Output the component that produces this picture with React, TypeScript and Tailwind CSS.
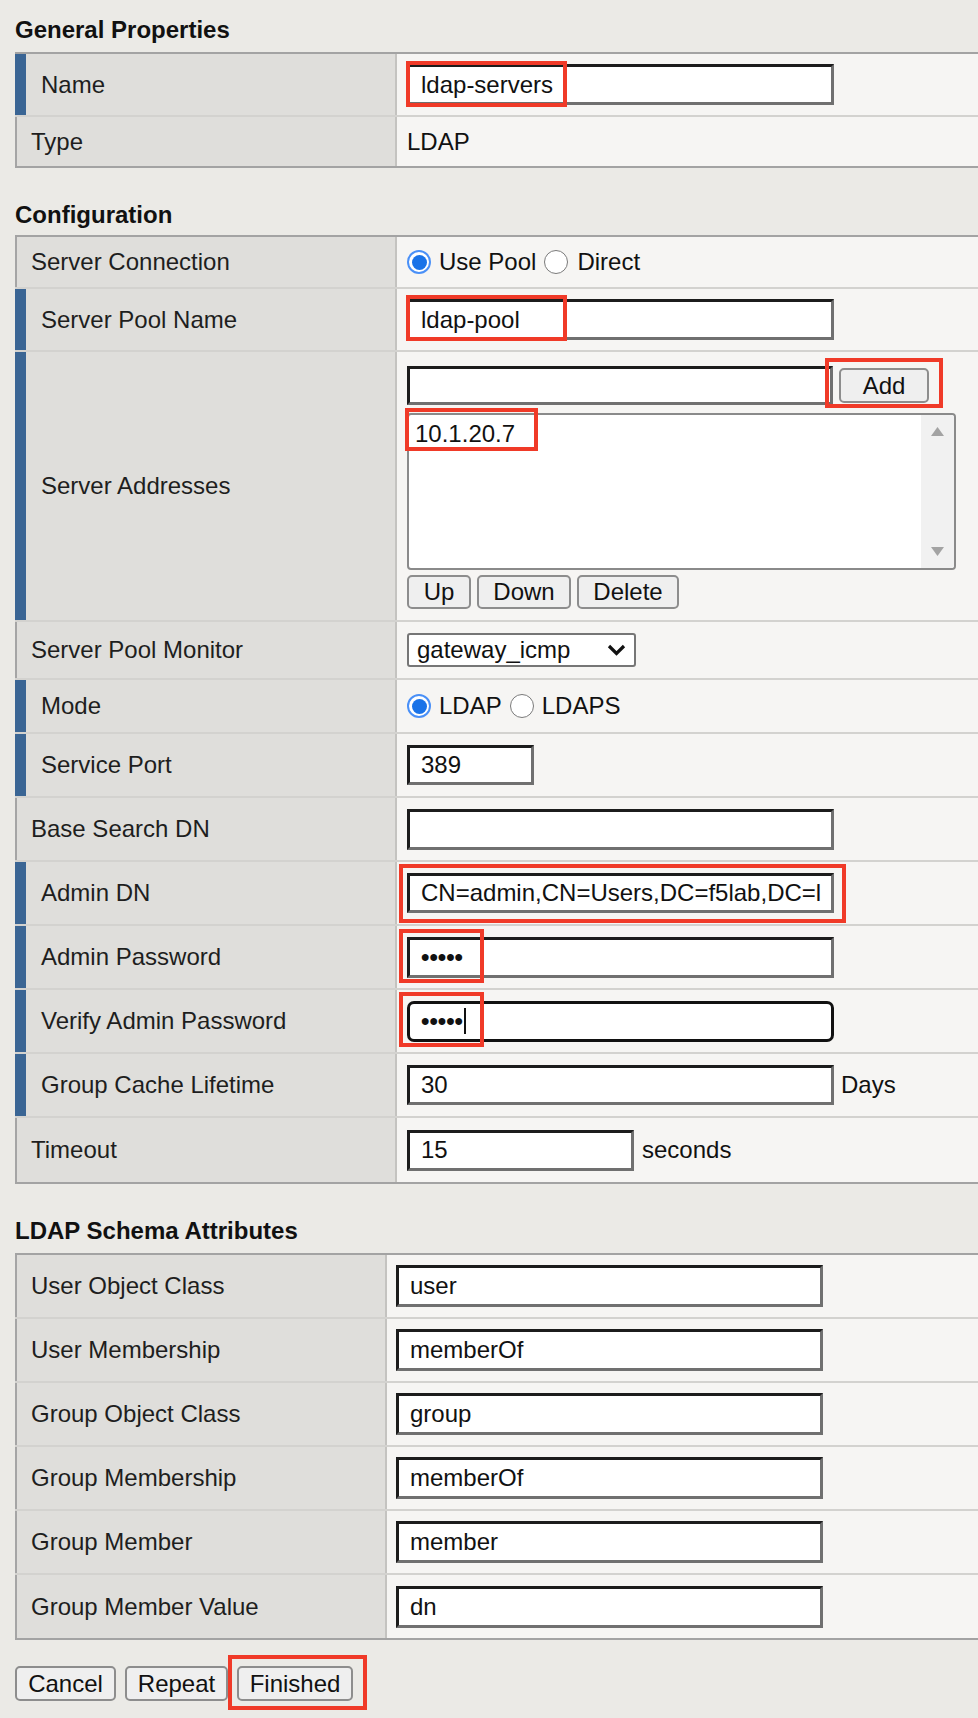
import React from "react";

function Red({ cls }: { cls: string }) {
  return <span className={`pointer-events-none absolute border-[4px] border-[#f03a28] ${cls}`} />;
}

function Box({
  w,
  h = "h-[41px]",
  focus = false,
  children,
  red,
}: {
  w: string;
  h?: string;
  focus?: boolean;
  children?: React.ReactNode;
  red?: React.ReactNode;
}) {
  return (
    <div className={`relative shrink-0 ${w} ${h}`}>
      <div
        className={`flex h-full w-full items-center overflow-hidden whitespace-nowrap bg-white pl-[11px] text-[24px] text-[#111] ${
          focus
            ? "rounded-[7px] border-[3px] border-[#111]"
            : "border-[3px] border-t-[#1c1c1c] border-l-[#1c1c1c] border-r-[#707070] border-b-[#707070]"
        }`}
      >
        {children}
      </div>
      {red}
    </div>
  );
}

function Row({
  label,
  bar = false,
  h,
  last = false,
  lw = "w-[382px]",
  vcls = "items-center pl-[10px]",
  children,
}: {
  label: string;
  bar?: boolean;
  h: string;
  last?: boolean;
  lw?: string;
  vcls?: string;
  children?: React.ReactNode;
}) {
  return (
    <div className={`flex ${h} ${last ? "" : "border-b-2 border-[#d3d2cf]"}`}>
      <div
        className={`flex shrink-0 items-center ${lw} border-r-2 border-r-[#c4c3c0] bg-[#dfdedb] text-[24px] text-[#1e1e1e] ${
          bar ? "border-l-[11px] border-l-[#3a6594] pl-[15px]" : "border-l-2 border-l-[#a5a5a5] pl-[14px]"
        }`}
      >
        {label}
      </div>
      <div className={`flex flex-1 bg-[#f6f5f3] text-[24px] text-[#111] ${vcls}`}>{children}</div>
    </div>
  );
}

function Radio({ on }: { on: boolean }) {
  return on ? (
    <span className="flex h-[24px] w-[24px] shrink-0 items-center justify-center rounded-full border-2 border-[#4a90f7] bg-white">
      <span className="block h-[15px] w-[15px] rounded-full bg-[#1a73e8]" />
    </span>
  ) : (
    <span className="block h-[24px] w-[24px] shrink-0 rounded-full border-[1.5px] border-[#7a7a7a] bg-white" />
  );
}

function Btn({ w, h = "h-[34px]", children, red }: { w: string; h?: string; children: React.ReactNode; red?: React.ReactNode }) {
  return (
    <div className={`relative shrink-0 ${w} ${h}`}>
      <div className="flex h-full w-full items-center justify-center rounded-[5px] border-2 border-[#8d8d8d] bg-[#efefef] text-[24px] text-[#111]">
        {children}
      </div>
      {red}
    </div>
  );
}

function Heading({ children, cls }: { children: React.ReactNode; cls: string }) {
  return <div className={`text-[24px] font-bold leading-[27px] text-[#111] ${cls}`}>{children}</div>;
}

export default function App() {
  return (
    <div className="min-h-screen w-[978px] overflow-hidden bg-[#ebeae6] pl-[15px] pt-[16px] font-['Liberation_Sans',Arial,sans-serif]">
      <Heading cls="mb-[9px]">General Properties</Heading>
      <div className="border-t-2 border-b-2 border-[#a3a3a3]">
        <Row label="Name" bar h="h-[63px]">
          <Box w="w-[427px]" red={<Red cls="-left-[1px] -top-[3px] h-[46px] w-[161px]" />}>
            ldap-servers
          </Box>
        </Row>
        <Row label="Type" h="h-[49px]" last>
          LDAP
        </Row>
      </div>

      <Heading cls="mt-[33px] mb-[7px]">Configuration</Heading>
      <div className="border-t-2 border-b-2 border-[#a3a3a3]">
        <Row label="Server Connection" h="h-[52px]">
          <div className="flex items-center">
            <Radio on />
            <span className="ml-[8px]">Use Pool</span>
            <span className="ml-[8px]">
              <Radio on={false} />
            </span>
            <span className="ml-[9px]">Direct</span>
          </div>
        </Row>
        <Row label="Server Pool Name" bar h="h-[63px]">
          <Box w="w-[427px]" red={<Red cls="-left-[1px] -top-[4px] h-[46px] w-[161px]" />}>
            ldap-pool
          </Box>
        </Row>
        <Row label="Server Addresses" bar h="h-[270px]" vcls="flex-col items-start pl-[10px] pt-[14px]">
          <div className="flex items-center">
            <Box w="w-[426px]" h="h-[39px]" />
            <div className="ml-[6px]">
              <Btn w="w-[90px]" h="h-[35px]" red={<Red cls="-left-[14px] -top-[10px] h-[50px] w-[118px]" />}>
                Add
              </Btn>
            </div>
          </div>
          <div className="relative mt-[8px] flex h-[157px] w-[549px] rounded-[4px] border-2 border-[#8a8a8a] bg-white">
            <div className="flex-1 pl-[6px] pt-[1px] text-[24px] text-[#111]">10.1.20.7</div>
            <div className="flex w-[33px] flex-col items-center justify-between rounded-r-[3px] bg-[#f1f1f1] py-[12px]">
              <svg width="13" height="9" viewBox="0 0 13 9">
                <polygon points="6.5,0 13,9 0,9" fill="#a3a3a3" />
              </svg>
              <svg width="13" height="9" viewBox="0 0 13 9">
                <polygon points="0,0 13,0 6.5,9" fill="#a3a3a3" />
              </svg>
            </div>
            <Red cls="-left-[4px] -top-[7px] h-[43px] w-[133px]" />
          </div>
          <div className="mt-[5px] flex gap-[6px]">
            <Btn w="w-[64px]">Up</Btn>
            <Btn w="w-[94px]">Down</Btn>
            <Btn w="w-[102px]">Delete</Btn>
          </div>
        </Row>
        <Row label="Server Pool Monitor" h="h-[58px]">
          <div className="flex h-[34px] w-[229px] items-center justify-between rounded-[3px] border-2 border-[#767676] bg-white pl-[8px] pr-[8px]">
            <span>gateway_icmp</span>
            <svg width="19" height="12" viewBox="0 0 19 12">
              <polyline points="2,2 9.5,9.5 17,2" fill="none" stroke="#111" strokeWidth="3.2" />
            </svg>
          </div>
        </Row>
        <Row label="Mode" bar h="h-[54px]">
          <div className="flex items-center">
            <Radio on />
            <span className="ml-[8px]">LDAP</span>
            <span className="ml-[8px]">
              <Radio on={false} />
            </span>
            <span className="ml-[8px]">LDAPS</span>
          </div>
        </Row>
        <Row label="Service Port" bar h="h-[64px]">
          <Box w="w-[127px]" h="h-[40px]">389</Box>
        </Row>
        <Row label="Base Search DN" h="h-[64px]">
          <Box w="w-[427px]" />
        </Row>
        <Row label="Admin DN" bar h="h-[64px]">
          <Box w="w-[427px]" h="h-[40px]" red={<Red cls="-left-[8px] -top-[9px] h-[59px] w-[447px]" />}>
            CN=admin,CN=Users,DC=f5lab,DC=l
          </Box>
        </Row>
        <Row label="Admin Password" bar h="h-[64px]">
          <Box w="w-[427px]" red={<Red cls="-left-[8px] -top-[8px] h-[54px] w-[85px]" />}>
            <span className="font-bold">•••••</span>
          </Box>
        </Row>
        <Row label="Verify Admin Password" bar h="h-[64px]">
          <Box w="w-[427px]" focus red={<Red cls="-left-[8px] -top-[9px] h-[55px] w-[85px]" />}>
            <span className="font-bold">•••••</span>
            <span className="ml-[1px] block h-[26px] w-[2px] bg-[#111]" />
          </Box>
        </Row>
        <Row label="Group Cache Lifetime" bar h="h-[64px]">
          <Box w="w-[427px]" h="h-[40px]">30</Box>
          <span className="ml-[7px]">Days</span>
        </Row>
        <Row label="Timeout" h="h-[64px]" last>
          <Box w="w-[227px]">15</Box>
          <span className="ml-[8px]">seconds</span>
        </Row>
      </div>

      <Heading cls="mt-[33px] mb-[9px]">LDAP Schema Attributes</Heading>
      <div className="border-t-2 border-b-2 border-[#a3a3a3]">
        {[
          ["User Object Class", "user"],
          ["User Membership", "memberOf"],
          ["Group Object Class", "group"],
          ["Group Membership", "memberOf"],
          ["Group Member", "member"],
          ["Group Member Value", "dn"],
        ].map(([l, v], i) => (
          <Row key={l} label={l} lw="w-[372px]" vcls="items-center pl-[9px]" h={i === 5 ? "h-[63px]" : "h-[64px]"} last={i === 5}>
            <Box w="w-[427px]" h="h-[42px]">{v}</Box>
          </Row>
        ))}
      </div>

      <div className="mt-[26px] flex gap-[9px] pb-[17px]">
        <Btn w="w-[101px]" h="h-[35px]">Cancel</Btn>
        <Btn w="w-[103px]" h="h-[35px]">Repeat</Btn>
        <Btn w="w-[116px]" h="h-[35px]" red={<Red cls="-left-[9px] -top-[11px] h-[55px] w-[139px]" />}>
          Finished
        </Btn>
      </div>
    </div>
  );
}
